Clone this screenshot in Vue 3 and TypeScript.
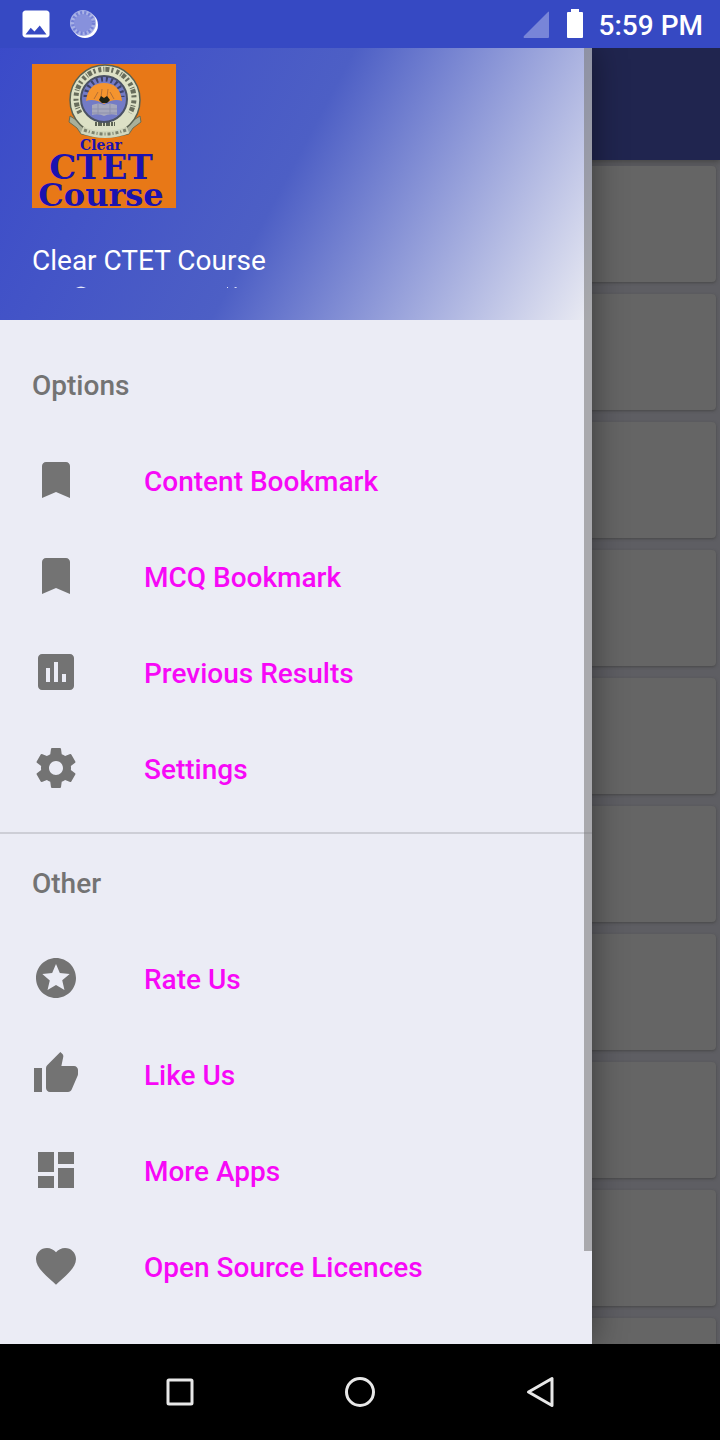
<script setup lang="ts">
interface Item {
  label: string
  path: string
}
interface Group {
  title: string
  items: Item[]
}

const bookmark = 'M17 3H7c-1.100 0-2 .9-2 2v16l7-3 7 3V5c0-1.100-.9-2-2-2z'

const groups: Group[] = [
  {
    title: 'Options',
    items: [
      { label: 'Content Bookmark', path: bookmark },
      { label: 'MCQ Bookmark', path: bookmark },
      {
        label: 'Previous Results',
        path: 'M19 3H5c-1.100 0-2 .9-2 2v14c0 1.100.9 2 2 2h14c1.100 0 2-.9 2-2V5c0-1.100-.9-2-2-2zM9 17H7v-7h2v7zm4 0h-2V7h2v10zm4 0h-2v-4h2v4z',
      },
      {
        label: 'Settings',
        path: 'M19.430 12.980c.04-.32.07-.64.07-.98s-.03-.66-.07-.98l2.110-1.650c.19-.15.24-.42.12-.64l-2-3.460c-.12-.22-.39-.3-.61-.22l-2.490 1c-.52-.4-1.080-.73-1.690-.98l-.38-2.650C14.460 2.180 14.250 2 14 2h-4c-.25 0-.46.18-.49.42l-.38 2.650c-.61.25-1.170.59-1.690.98l-2.490-1c-.23-.09-.49 0-.61.22l-2 3.460c-.13.22-.07.49.12.64l2.110 1.650c-.04.32-.07.65-.07.98s.03.66.07.98l-2.110 1.650c-.19.15-.24.42-.12.64l2 3.460c.12.22.39.3.61.22l2.490-1c.52.4 1.080.73 1.690.98l.38 2.650c.03.24.24.42.49.42h4c.25 0 .46-.18.49-.42l.38-2.650c.61-.25 1.170-.59 1.690-.98l2.490 1c.23.09.49 0 .61-.22l2-3.460c.12-.22.07-.49-.12-.64l-2.110-1.650zM12 15.500c-1.930 0-3.500-1.570-3.500-3.500s1.570-3.500 3.500-3.500 3.500 1.570 3.500 3.500-1.570 3.500-3.500 3.500z',
      },
    ],
  },
  {
    title: 'Other',
    items: [
      {
        label: 'Rate Us',
        path: 'M11.990 2C6.470 2 2 6.480 2 12s4.470 10 9.990 10C17.520 22 22 17.520 22 12S17.520 2 11.990 2zm4.240 16L12 15.450 7.770 18l1.120-4.810-3.730-3.230 4.920-.42L12 5l1.920 4.530 4.920.42-3.730 3.230L16.230 18z',
      },
      {
        label: 'Like Us',
        path: 'M1 21h4V9H1v12zm22-11c0-1.100-.9-2-2-2h-6.310l.95-4.570.03-.32c0-.41-.17-.79-.44-1.060L14.170 1 7.590 7.590C7.220 7.950 7 8.450 7 9v10c0 1.100.9 2 2 2h9c.83 0 1.540-.5 1.840-1.220l3.020-7.050c.09-.23.14-.47.14-.73v-2z',
      },
      { label: 'More Apps', path: 'M3 13h8V3H3v10zm0 8h8v-6H3v6zm10 0h8V11h-8v10zm0-18v6h8V3h-8z' },
      {
        label: 'Open Source Licences',
        path: 'M12 21.350l-1.450-1.320C5.400 15.360 2 12.280 2 8.500 2 5.420 4.420 3 7.500 3c1.740 0 3.410.81 4.500 2.090C13.090 3.810 14.760 3 16.500 3 19.580 3 22 5.420 22 8.500c0 3.780-3.400 6.860-8.550 11.540L12 21.350z',
      },
    ],
  },
]

const cards = 10
</script>

<template>
  <div class="screen">
    <header class="status">
      <svg class="status-icon" viewBox="0 0 24 24" aria-hidden="true">
        <path fill="#fff" d="M21 19V5c0-1.100-.9-2-2-2H5c-1.100 0-2 .9-2 2v14c0 1.100.9 2 2 2h14c1.100 0 2-.9 2-2zM8.500 14.500l2.500 2.510L14.500 13l4.500 6H5l3.500-4.500z" />
      </svg>
      <svg class="status-icon" viewBox="0 0 36 36" aria-hidden="true">
        <circle cx="19" cy="19" r="13" fill="#fff" />
        <circle cx="17" cy="17" r="13" fill="#a9b2e6" />
        <circle cx="17" cy="17" r="10" fill="none" stroke="#7480d6" stroke-width="4" stroke-dasharray="2 2" />
        <circle cx="17" cy="17" r="9" fill="#8791dc" />
      </svg>
      <span class="spacer"></span>
      <svg class="signal" viewBox="0 0 28 28" aria-hidden="true">
        <path fill="#7885d8" d="M26 2v25a1 1 0 0 1-1 1H1q-1-1 0-2L25 2q1-1 1 0z" />
      </svg>
      <svg class="battery" viewBox="0 0 16 30" aria-hidden="true">
        <path fill="#fff" d="M4 0h8v3h3q1 0 1 1v24q0 1-1 1H1q-1 0-1-1V4q0-1 1-1h3z" />
      </svg>
      <time class="clock">5:59 PM</time>
    </header>

    <main class="stage">
      <div class="backdrop" aria-hidden="true">
        <div class="toolbar"></div>
        <div class="cards">
          <div v-for="n in cards" :key="n" class="card"></div>
        </div>
      </div>

      <aside class="drawer">
        <div class="profile">
          <svg class="logo" viewBox="0 0 144 144" role="img" aria-label="Clear CTET Course">
            <rect width="144" height="144" fill="#e87817" />
            <path d="M38 52l8 5q27 20 54 0l8-5 1 6-8 6-4 6q-25 7-48 0l-4-6-8-6z" fill="#a9b09a" stroke="#6c6c50" />
            <circle cx="73" cy="36" r="35" fill="#dde1c6" stroke="#5b6252" stroke-width="1.500" />
            <path d="M48 49a29 29 0 1 1 50 0" fill="none" stroke="#686d5c" stroke-width="5" stroke-dasharray="3 2 1 1 4 2 2 3" />
            <path d="M63 60h20" fill="none" stroke="#5d6353" stroke-width="4" stroke-dasharray="2 1 4 1" />
            <circle cx="72" cy="35" r="23" fill="#737bc6" stroke="#4a5164" stroke-width="2" />
            <path d="M54 33a18 18 0 0 1 36 0" fill="none" stroke="#3d4268" stroke-width="5" stroke-dasharray="2 3" />
            <path d="M54 37q2-18 18-18t18 18q-8-3-18 3-10-6-18-3z" fill="#f4942e" />
            <path d="M62 35l4-7M69 33l1-8M75 33l1-8M82 35l-4-7" stroke="#b56f34" />
            <path d="M60 41q7-3 12 0 5-3 13 0v10q-8-2-13 1-5-3-12-1z" fill="#a6a8bd" />
            <path d="M60 45h25M60 49h25M66 40v11M78 40v11" stroke="#8d90ac" fill="none" />
            <path d="M67 36l2-4 3 2 3-2 3 4-3 3h-5z" fill="#1d2114" />
            <path d="M50 66q23 9 46 0" fill="none" stroke="#d2d7bd" stroke-width="7" />
            <path d="M52 66q21 8 42 0" fill="none" stroke="#7b806c" stroke-width="3" stroke-dasharray="3 2 1 2" />
            <text x="69" y="86" font-size="14">Clear</text>
            <text x="69" y="115" font-size="34">CTET</text>
            <text x="69" y="142" font-size="32">Course</text>
          </svg>
          <h1 class="name">Clear CTET Course</h1>
          <div class="clipped" aria-hidden="true">
            <svg viewBox="0 0 240 2">
              <path d="M44 2q5-3 10 0zM195 1h1v1h-1zM202 2q2-2 3 0z" fill="#e3e7fa" />
            </svg>
          </div>
        </div>

        <nav class="menu" aria-label="Main menu">
          <section v-for="g in groups" :key="g.title" class="group">
            <h2 class="title">{{ g.title }}</h2>
            <a v-for="i in g.items" :key="i.label" class="item" href="#">
              <svg class="icon" viewBox="0 0 24 24" aria-hidden="true"><path :d="i.path" /></svg>
              <span class="label">{{ i.label }}</span>
            </a>
          </section>
        </nav>
        <span class="scrollbar"></span>
      </aside>
    </main>

    <footer class="navbar">
      <button type="button" aria-label="Recent apps">
        <svg viewBox="0 0 48 48"><rect x="12" y="12" width="24" height="24" rx="1" /></svg>
      </button>
      <button type="button" aria-label="Home">
        <svg viewBox="0 0 48 48"><circle cx="24" cy="24" r="13.500" /></svg>
      </button>
      <button type="button" aria-label="Back">
        <svg viewBox="0 0 48 48"><path d="M36 10.500v27L12.500 24z" /></svg>
      </button>
    </footer>
  </div>
</template>

<style>
body {
  margin: 0;
}
</style>

<style scoped>
.screen {
  display: flex;
  flex-direction: column;
  min-height: 100vh;
  font-family: Roboto, "Noto Sans", sans-serif;
}
.status {
  display: flex;
  align-items: center;
  height: 48px;
  box-sizing: border-box;
  padding: 0 17px 0 18px;
  background: #3649c3;
  color: #fff;
}
.status-icon {
  width: 36px;
  height: 36px;
  margin-right: 12px;
}
.spacer {
  flex: 1;
}
.signal {
  width: 28px;
  height: 28px;
  margin-right: 16px;
}
.battery {
  width: 16px;
  height: 30px;
  margin-right: 16px;
}
.clock {
  padding-top: 4px;
  font-size: 28px;
  line-height: 44px;
  font-weight: 500;
}
.stage {
  position: relative;
  flex: 1;
  display: flex;
  overflow: hidden;
}
.backdrop {
  position: absolute;
  inset: 0;
  background: #5e5e63;
}
.toolbar {
  height: 112px;
  background: #20254f;
  box-shadow: 0 2px 6px #444;
}
.cards {
  display: grid;
  gap: 12px;
  padding: 6px 4px;
}
.card {
  height: 116px;
  border-radius: 4px;
  background: #656565;
  box-shadow: 0 1px 3px #484848;
}
.drawer {
  position: relative;
  width: calc(100% - 128px);
  background: #ebecf5;
  box-shadow: 0 0 32px rgba(0, 0, 0, 0.45);
}
.profile {
  box-sizing: border-box;
  padding: 16px 32px 32px;
  background: linear-gradient(118deg, #3949c9, #4d5fc5 50%, #ebecf3) bottom / 100% 320px no-repeat;
  color: #fff;
}
.logo {
  display: block;
  width: 144px;
  height: 144px;
  overflow: visible;
}
.logo text {
  font-family: "DejaVu Serif", serif;
  font-weight: 700;
  text-anchor: middle;
  fill: #1b12b0;
}
.name {
  margin: 36px 0 0;
  font-size: 28px;
  line-height: 34px;
  font-weight: 400;
}
.clipped {
  width: 240px;
  height: 2px;
  margin-top: 8px;
}
.clipped svg {
  display: block;
}
.menu {
  padding-top: 16px;
}
.group {
  padding-bottom: 16px;
}
.group + .group {
  border-top: 2px solid #cdced6;
}
.title {
  margin: 0;
  padding: 4px 32px 0;
  font-size: 28px;
  line-height: 92px;
  font-weight: 500;
  color: #737373;
}
.item {
  display: flex;
  align-items: center;
  gap: 64px;
  height: 96px;
  padding: 0 32px;
  font-size: 28px;
  font-weight: 500;
  color: #f708f7;
  text-decoration: none;
}
.label {
  padding-top: 2px;
}
.icon {
  width: 48px;
  height: 48px;
  fill: #737373;
}
.scrollbar {
  position: absolute;
  top: 0;
  right: 0;
  width: 8px;
  height: 1203px;
  background: rgba(120, 120, 120, 0.58);
}
.navbar {
  display: flex;
  justify-content: center;
  gap: 132px;
  height: 96px;
  background: #000;
}
.navbar button {
  padding: 0;
  border: 0;
  background: none;
}
.navbar svg {
  display: block;
  width: 48px;
  height: 48px;
  fill: none;
  stroke: #e8e8e8;
  stroke-width: 3;
  stroke-linejoin: round;
}
</style>
